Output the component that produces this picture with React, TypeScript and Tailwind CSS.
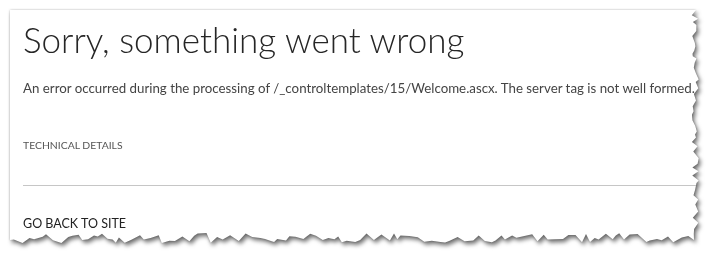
import * as React from "react";

// size of the paper piece, before the torn right and bottom edges
const W = 690;
const H = 234;

// simple seeded random so the torn edge looks the same every time
const seeded = (seed: number) => {
  let s = seed;
  return () => {
    s = (s * 9301 + 49297) % 233280;
    return s / 233280;
  };
};

const tornEdge = (): string => {
  const r = seeded(11);
  const pts: string[] = ["0px 0px", `${W - 4}px 0px`];
  let y = 0;
  while (y < H - 14) {
    y += 2 + r() * 5;
    pts.push(`${(W - 1 - r() * 8).toFixed(1)}px ${y.toFixed(1)}px`);
  }
  pts.push(`${W - 6}px ${H - 4}px`);
  let x = W - 6;
  while (x > 8) {
    x -= 3 + r() * 6;
    pts.push(`${x.toFixed(1)}px ${(H - 1 - r() * 10).toFixed(1)}px`);
  }
  pts.push(`0px ${H - 4}px`);
  return `polygon(${pts.join(",")})`;
};

export default function App() {
  const clip = React.useMemo(tornEdge, []);

  return (
    <div className="w-[721px] h-[262px] bg-white overflow-hidden font-['Lato',sans-serif]">
      <div className="pt-[10px] pl-[10px] [filter:drop-shadow(0_0_1px_rgba(0,0,0,0.25))_drop-shadow(2px_3px_2px_rgba(0,0,0,0.55))]">
        <div
          className="bg-white flex flex-col pl-[13px] w-[690px] h-[234px]"
          style={{ clipPath: clip }}
        >
          <h1 className="mt-[7px] text-[35px] leading-[44px] font-light text-[#262626] whitespace-nowrap">
            Sorry, something went wrong
          </h1>
          <p className="mt-[17px] text-[13.3px] leading-[20px] text-[#444] whitespace-nowrap">
            An error occurred during the processing of
            /_controltemplates/15/Welcome.ascx. The server tag is not well
            formed.
          </p>
          <div className="mt-[40px] text-[10.4px] leading-[14px] text-[#555] uppercase">
            Technical Details
          </div>
          <div className="mt-[33px] h-px bg-[#c6c6c6] mr-[-20px]" />
          <a className="mt-[30px] text-[12.5px] leading-[16px] text-[#222] uppercase">
            Go back to site
          </a>
        </div>
      </div>
    </div>
  );
}
